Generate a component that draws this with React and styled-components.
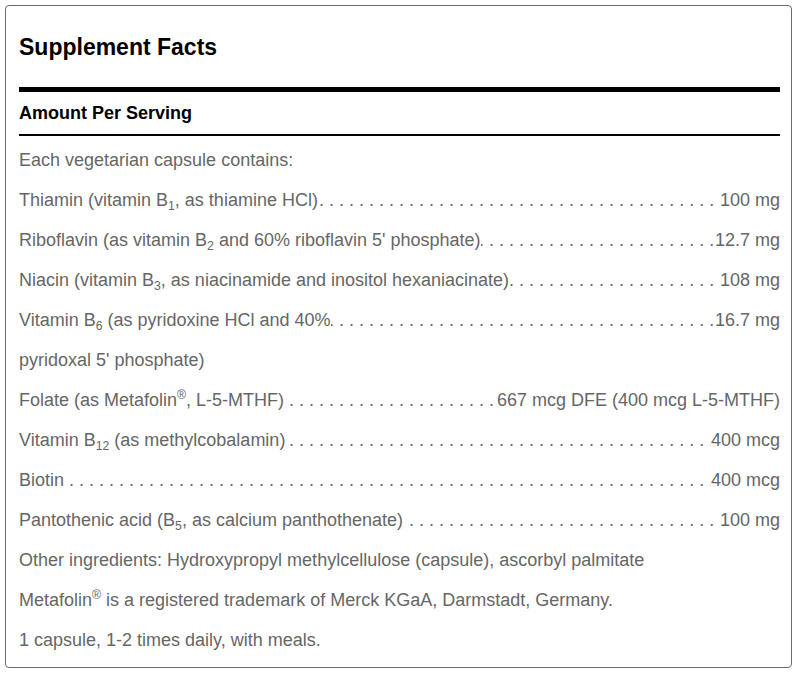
import React from 'react';
import styled, { createGlobalStyle } from 'styled-components';

const GlobalStyle = createGlobalStyle`
  body {
    margin: 0;
    background: #fff;
    font-family: "Liberation Sans", Arial, sans-serif;
  }
`;

const DOTS = '. '.repeat(120);

const Page = styled.div`
  padding: 5px 8px 5px 5px;
`;

const Panel = styled.section`
  border: 1px solid #6b6b6b;
  border-radius: 4px;
  padding: 28px 11px 7px 13px;
`;

const Title = styled.h2`
  margin: 0;
  font-size: 23px;
  line-height: 26px;
  font-weight: 700;
  color: #000;
`;

const Rule = styled.div`
  height: ${(p) => p.$weight}px;
  background: #000;
  margin-top: ${(p) => p.$gap}px;
`;

const SubTitle = styled.h3`
  margin: 0;
  padding-top: 1px;
  font-size: 18px;
  line-height: 40px;
  font-weight: 700;
  color: #000;
`;

const List = styled.div`
  padding-top: 4px;
  color: #666;
  font-size: 18px;
  line-height: 40px;
`;

const Line = styled.div`
  white-space: nowrap;
`;

const LeaderRow = styled.div`
  overflow: hidden;
  white-space: nowrap;

  &::before {
    float: left;
    width: 0;
    white-space: nowrap;
    content: "${DOTS}";
  }
`;

const Label = styled.span`
  background: #fff;
`;

const Value = styled.span`
  float: right;
  background: #fff;
`;

const Sub = styled.sub`
  font-size: 0.68em;
  line-height: 0;
  vertical-align: -0.3em;
`;

const Sup = styled.sup`
  font-size: 0.68em;
  line-height: 0;
  vertical-align: 0.55em;
`;

const facts = [
  { label: <>Thiamin (vitamin B<Sub>1</Sub>, as thiamine HCl)</>, value: '100 mg' },
  { label: <>Riboflavin (as vitamin B<Sub>2</Sub> and 60% riboflavin 5' phosphate)</>, value: '12.7 mg' },
  { label: <>Niacin (vitamin B<Sub>3</Sub>, as niacinamide and inositol hexaniacinate)</>, value: '108 mg' },
  { label: <>Vitamin B<Sub>6</Sub> (as pyridoxine HCl and 40%<br />pyridoxal 5' phosphate)</>, value: '16.7 mg' },
  { label: <>Folate (as Metafolin<Sup>®</Sup>, L-5-MTHF)</>, value: '667 mcg DFE (400 mcg L-5-MTHF)' },
  { label: <>Vitamin B<Sub>12</Sub> (as methylcobalamin)</>, value: '400 mcg' },
  { label: 'Biotin', value: '400 mcg' },
  { label: <>Pantothenic acid (B<Sub>5</Sub>, as calcium panthothenate)</>, value: '100 mg' },
];

export default function App() {
  return (
    <Page>
      <GlobalStyle />
      <Panel>
        <Title>Supplement Facts</Title>
        <Rule $weight={5} $gap={27} />
        <SubTitle>Amount Per Serving</SubTitle>
        <Rule $weight={2} $gap={1} />
        <List>
          <Line>Each vegetarian capsule contains:</Line>
          {facts.map((f, i) => (
            <LeaderRow key={i}>
              <Value>{f.value}</Value>
              <Label>{f.label}</Label>
            </LeaderRow>
          ))}
          <Line>Other ingredients: Hydroxypropyl methylcellulose (capsule), ascorbyl palmitate</Line>
          <Line>Metafolin<Sup>®</Sup> is a registered trademark of Merck KGaA, Darmstadt, Germany.</Line>
          <Line>1 capsule, 1-2 times daily, with meals.</Line>
        </List>
      </Panel>
    </Page>
  );
}
